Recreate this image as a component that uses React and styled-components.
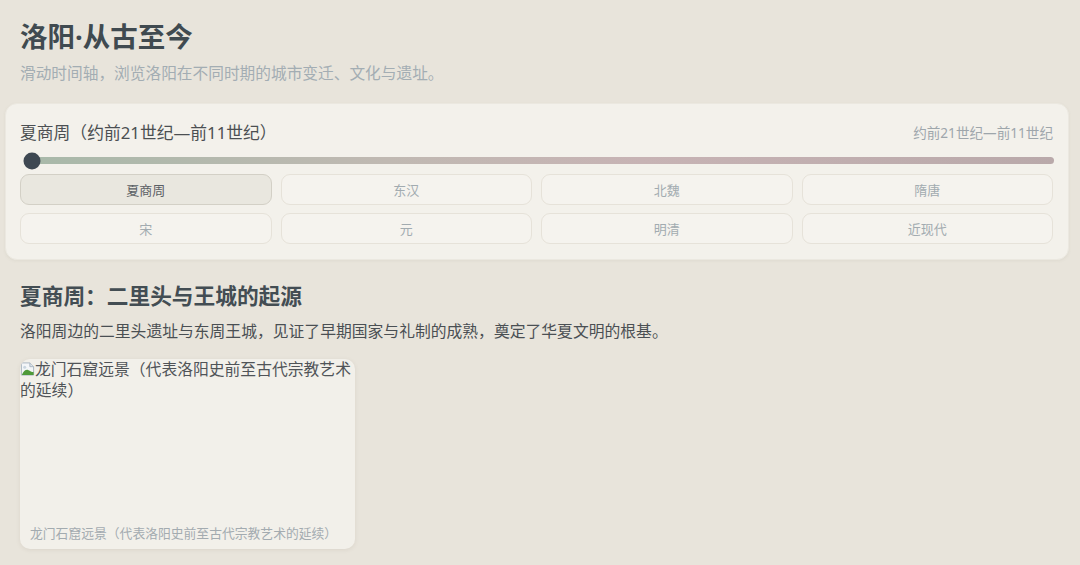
import React, { useState } from "react"
import styled, { createGlobalStyle } from "styled-components"

const GlobalStyle = createGlobalStyle`
  html, body {
    margin: 0;
    padding: 0;
    background: #e8e4db;
  }
  body {
    font-family: "Noto Sans", "Noto Sans CJK SC", sans-serif;
    color: #3f4a4f;
  }
`

const eras = [
  { name: "夏商周", range: "约前21世纪—前11世纪" },
  { name: "东汉", range: "25年—220年" },
  { name: "北魏", range: "493年—534年" },
  { name: "隋唐", range: "581年—907年" },
  { name: "宋", range: "960年—1279年" },
  { name: "元", range: "1271年—1368年" },
  { name: "明清", range: "1368年—1912年" },
  { name: "近现代", range: "1912年至今" },
]

const App = () => {
  const [active, setActive] = useState(0)
  const era = eras[active]
  const pct = (active / (eras.length - 1)) * 100

  return (
    <Page>
      <GlobalStyle />
      <Header>
        <Title>洛阳·从古至今</Title>
        <Subtitle>滑动时间轴，浏览洛阳在不同时期的城市变迁、文化与遗址。</Subtitle>
      </Header>

      <Panel>
        <PanelHead>
          <EraLabel>
            {era.name}（{era.range}）
          </EraLabel>
          <EraRange>{era.range}</EraRange>
        </PanelHead>
        <Track>
          <Thumb style={{ left: `${pct}%` }} />
        </Track>
        <EraGrid>
          {eras.map((e, i) => (
            <EraButton
              key={e.name}
              $active={i === active}
              onClick={() => setActive(i)}
            >
              {e.name}
            </EraButton>
          ))}
        </EraGrid>
      </Panel>

      <Story>
        <StoryTitle>夏商周：二里头与王城的起源</StoryTitle>
        <StoryText>
          洛阳周边的二里头遗址与东周王城，见证了早期国家与礼制的成熟，奠定了华夏文明的根基。
        </StoryText>
        <Figure>
          <AltText>
            <BrokenIcon viewBox="0 0 16 16">
              <path d="M1.5 1.5h9l4 4v9h-13z" fill="#f4f6f8" stroke="#a8b4c0" />
              <path d="M10.5 1.5v4h4" fill="#dfe5ea" stroke="#a8b4c0" />
              <path d="M2 14.5c1.5-4 4-6 6.5-5.5S12 12 14.5 11v3.5H2z" fill="#4f9a3a" />
              <circle cx="5" cy="6" r="1.6" fill="#c9d6e0" />
            </BrokenIcon>
            龙门石窟远景（代表洛阳史前至古代宗教艺术的延续）
          </AltText>
          <Caption>龙门石窟远景（代表洛阳史前至古代宗教艺术的延续）</Caption>
        </Figure>
      </Story>
    </Page>
  )
}

export default App

const Page = styled.div`
  padding: 18px 11px 14px 5px;
  display: flex;
  flex-direction: column;
`

const Header = styled.header`
  padding-left: 15px;
  margin-bottom: 13px;
`

const Title = styled.h1`
  margin: 0;
  font-size: 27.5px;
  line-height: 38px;
  font-weight: 700;
  color: #404a50;
`

const Subtitle = styled.p`
  margin: 0;
  font-size: 15.7px;
  line-height: 34px;
  color: #a3adb3;
`

const Panel = styled.section`
  background: #f3f1eb;
  border: 1px solid #ebe8e0;
  border-radius: 12px;
  padding: 14px 15px 15px 14px;
  box-shadow: 0 1px 3px rgba(120, 110, 90, 0.08);
`

const PanelHead = styled.div`
  display: flex;
  justify-content: space-between;
  align-items: center;
  height: 28px;
`

const EraLabel = styled.div`
  font-size: 16.8px;
  color: #4b4f52;
`

const EraRange = styled.div`
  font-size: 13.6px;
  color: #9ea6ab;
`

const Track = styled.div`
  position: relative;
  margin: 11px -1px 10px 8px;
  height: 7px;
  border-radius: 4px;
  background: linear-gradient(
    90deg,
    #a8b9a9 0%,
    #c0b9b2 35%,
    #c7b3b4 60%,
    #b9a9aa 100%
  );
`

const Thumb = styled.div`
  position: absolute;
  top: 50%;
  width: 17px;
  height: 17px;
  border-radius: 50%;
  background: #3e4852;
  transform: translate(-50%, -50%);
  margin-left: 4px;
`

const EraGrid = styled.div`
  display: grid;
  grid-template-columns: repeat(4, 1fr);
  gap: 8px 9px;
`

const EraButton = styled.button`
  height: 31px;
  border-radius: 9px;
  border: 1px solid ${(p) => (p.$active ? "#d3d0c6" : "#e6e2d9")};
  background: ${(p) => (p.$active ? "#e9e7df" : "#f5f3ee")};
  color: ${(p) => (p.$active ? "#5b6065" : "#a2abb0")};
  font-family: "Noto Sans", "Noto Sans CJK SC", sans-serif;
  font-size: 13px;
  cursor: pointer;
  padding: 0;
`

const Story = styled.section`
  padding: 22px 0 0 15px;
`

const StoryTitle = styled.h2`
  margin: 0;
  font-size: 21.7px;
  line-height: 28px;
  font-weight: 700;
  color: #434d53;
`

const StoryText = styled.p`
  margin: 9px 0 16px;
  font-size: 15.8px;
  line-height: 24px;
  color: #4a4f53;
`

const Figure = styled.figure`
  margin: 0;
  width: 335px;
  height: 190px;
  display: flex;
  flex-direction: column;
  justify-content: space-between;
  background: #f2f0ea;
  border-radius: 10px;
  box-shadow: 0 1px 4px rgba(120, 110, 90, 0.12);
  overflow: hidden;
`

const AltText = styled.div`
  font-size: 15.8px;
  line-height: 21px;
  color: #505458;
`

const BrokenIcon = styled.svg`
  width: 15px;
  height: 16px;
  vertical-align: -2px;
`

const Caption = styled.figcaption`
  padding: 0 10px 7px;
  font-size: 12.8px;
  line-height: 18px;
  color: #a3abb0;
`
